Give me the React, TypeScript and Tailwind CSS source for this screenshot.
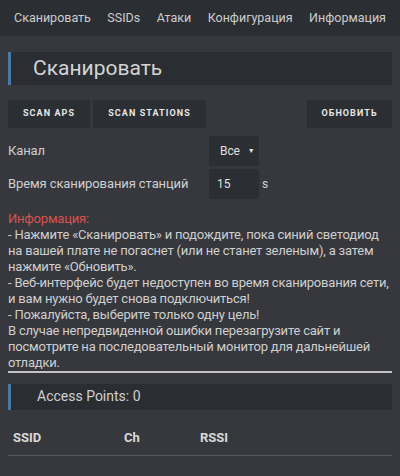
import React from 'react';

const font = { fontFamily: 'Roboto, "Noto Sans", sans-serif' };

function Section({ title, big }: { title: string; big?: boolean }) {
  return (
    <div className="flex bg-[#2a2d31]">
      <div className="w-[3px] bg-[#4a78a8]" />
      {big ? (
        <h1 className="h-[33px] flex items-center pl-[22px] text-[21px] text-[#d4d4d4]">{title}</h1>
      ) : (
        <h2 className="h-[26px] flex items-center pl-[26px] text-[14px] text-[#d0d0d0]">{title}</h2>
      )}
    </div>
  );
}

export default function App() {
  const nav = ['Сканировать', 'SSIDs', 'Атаки', 'Конфигурация', 'Информация'];
  return (
    <div className="w-[400px] h-[476px] overflow-hidden bg-[#36383d] text-[#cfcfcf]" style={font}>
      <nav className="h-[36px] bg-[#2b2e33] flex items-center justify-between pl-[14px] pr-[14px] text-[12.5px] text-[#cdcdcd]">
        {nav.map((n) => (
          <span key={n}>{n}</span>
        ))}
      </nav>

      <div className="px-2 pt-4">
        <Section title="Сканировать" big />

        <div className="flex mt-[15px] gap-[3px] text-[9px] font-bold tracking-[0.12em] text-[#e6e6e6]">
          <button className="h-[28px] w-[82px] bg-[#2b2e33]">SCAN APS</button>
          <button className="h-[28px] w-[113px] bg-[#2b2e33]">SCAN STATIONS</button>
          <button className="h-[28px] w-[85px] bg-[#2b2e33] ml-auto">ОБНОВИТЬ</button>
        </div>

        <div className="flex items-center mt-[8px] text-[13px] tracking-[-0.1px]">
          <span className="w-[201px]">Канал</span>
          <div className="h-[30px] w-[50px] bg-[#2b2e33] flex items-center pl-[11px] text-[12px] text-[#e0e0e0]">
            Все
            <span className="ml-[8px] text-[7px]">▼</span>
          </div>
        </div>
        <div className="flex items-center mt-[3px] text-[13px] tracking-[-0.1px]">
          <span className="w-[201px]">Время сканирования станций</span>
          <div className="h-[30px] w-[50px] bg-[#2b2e33] flex items-center pl-[8px] text-[12px] text-[#e0e0e0]">15</div>
          <span className="ml-[3px] text-[12px]">s</span>
        </div>

        <div className="mt-[12px] text-[13px] tracking-[-0.2px] leading-[16px] text-[#cfcfcf]">
          <div className="text-[#d9534f]">Информация:</div>
          <div>- Нажмите «Сканировать» и подождите, пока синий светодиод на вашей плате не погаснет (или не станет зеленым), а затем нажмите «Обновить».</div>
          <div>- Веб-интерфейс будет недоступен во время сканирования сети, и вам нужно будет снова подключиться!</div>
          <div>- Пожалуйста, выберите только одну цель!</div>
          <div>В случае непредвиденной ошибки перезагрузите сайт и посмотрите на последовательный монитор для дальнейшей отладки.</div>
        </div>

        <hr className="mt-0 border-0 h-[1.5px] bg-[#c4c4c4]" />

        <div className="mt-[11px]">
          <Section title="Access Points: 0" />
        </div>

        <table className="w-full mt-[18px] text-[13px] font-bold text-[#d8d8d8]">
          <thead>
            <tr className="border-b border-[#55585d]">
              <th className="text-left w-[116px] pl-[5px] pb-[8px]">SSID</th>
              <th className="text-left w-[76px] pb-[8px]">Ch</th>
              <th className="text-left pb-[8px]">RSSI</th>
            </tr>
          </thead>
        </table>
      </div>
    </div>
  );
}
